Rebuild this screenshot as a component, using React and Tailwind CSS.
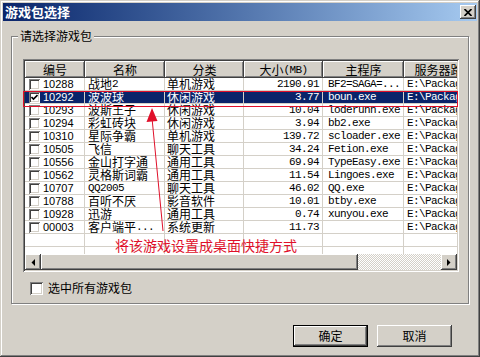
const raised = "shadow-[inset_-1px_-1px_#404040,inset_1px_1px_#ffffff,inset_-2px_-2px_#808080,inset_2px_2px_#d4d0c8]";
const sunken = "shadow-[inset_1px_1px_#808080,inset_-1px_-1px_#ffffff,inset_2px_2px_#404040,inset_-2px_-2px_#d4d0c8]";
const mono = "font-['Liberation_Mono',monospace] text-[11px] tracking-[-0.6px]";

const colW = ['w-[60px]', 'w-[80px]', 'w-[79px]', 'w-[79px]', 'w-[81px]', 'w-[81px]'];
const headers = ['编号', '名称', '分类', '大小(MB)', '主程序', '服务器路径'];

const games = [
    ['10288', '战地2', '单机游戏', '2190.91', 'BF2=SAGA=...'],
    ['10292', '波波球', '休闲游戏', '3.77', 'boun.exe'],
    ['10293', '波斯王子', '休闲游戏', '10.04', 'loderunn.exe'],
    ['10294', '彩虹砖块', '休闲游戏', '3.94', 'bb2.exe'],
    ['10310', '星际争霸', '单机游戏', '139.72', 'scloader.exe'],
    ['10505', '飞信', '聊天工具', '34.24', 'Fetion.exe'],
    ['10556', '金山打字通', '通用工具', '69.94', 'TypeEasy.exe'],
    ['10562', '灵格斯词霸', '通用工具', '11.54', 'Lingoes.exe'],
    ['10707', 'QQ2005', '聊天工具', '46.02', 'QQ.exe'],
    ['10788', '百听不厌', '影音软件', '10.01', 'btby.exe'],
    ['10928', '迅游', '通用工具', '0.74', 'xunyou.exe'],
    ['00003', '客户端平...', '系统更新', '11.73', ''],
];

// SimSun-ish: ascii runs get the narrow mono face
const mix = (s) => s.split(/([\x20-\x7e]+)/).filter(Boolean).map((part, i) =>
    /^[\x20-\x7e]+$/.test(part)
        ? <span key={i} className={mono}>{part}</span>
        : <span key={i}>{part}</span>
);

const CheckBox = ({ checked, size = 'w-[11px] h-[11px]' }) => (
    <span className={`${size} shrink-0 bg-white flex items-center justify-center ${sunken}`}>
        {checked && (
            <svg width="7" height="7" viewBox="0 0 7 7">
                <path d="M0.5 3 L2.5 5 L6.5 1" stroke="#000" strokeWidth="1.6" fill="none" />
            </svg>
        )}
    </span>
);

const Row = ({ g, selected }) => {
    const cell = `shrink-0 h-full border-r border-[#d4d0c8] flex items-center overflow-hidden whitespace-nowrap leading-[12px]`;
    return (
        <div className={`flex h-[13px] shrink-0 border-b border-[#d4d0c8] ${selected ? 'bg-[#0a246a] text-white' : ''}`}>
            <div className={`${cell} ${colW[0]}`}>
                {g && <span className="ml-[4px]"><CheckBox checked={selected} /></span>}
                {g && <span className="ml-[3px] font-['Liberation_Sans',sans-serif] text-[11px]">{g[0]}</span>}
            </div>
            <div className={`${cell} ${colW[1]} pl-[3px]`}>{g && mix(g[1])}</div>
            <div className={`${cell} ${colW[2]} pl-[2px]`}>{g && g[2]}</div>
            <div className={`${cell} ${colW[3]} justify-end pr-[3px] ${mono}`}>{g && g[3]}</div>
            <div className={`${cell} ${colW[4]} pl-[5px] ${mono}`}>{g && g[4]}</div>
            <div className={`${cell} ${colW[5]} pl-[3px] ${mono}`}>{g && 'E:\\Packages\\'}</div>
        </div>
    );
};

export default function App() {
    return (
        <div className={`relative w-[480px] h-[357px] overflow-hidden bg-[#d4d0c8] p-[3px] text-[12px] text-black font-['Noto_Sans_CJK_SC',sans-serif] shadow-[inset_-1px_-1px_#404040,inset_1px_1px_#d4d0c8,inset_-2px_-2px_#808080,inset_2px_2px_#ffffff]`}>
            {/* title bar */}
            <div className="flex items-center justify-between h-[18px] bg-linear-to-r from-[#0a246a] to-[#a6caf0] pl-[2px] pr-[1px]">
                <span className="text-white font-bold text-[13px] leading-[18px]">游戏包选择</span>
                <div className={`w-[16px] h-[14px] bg-[#d4d0c8] flex items-center justify-center ${raised}`}>
                    <svg width="8" height="7" viewBox="0 0 8 7">
                        <path d="M0.5 0 L7.5 7 M7.5 0 L0.5 7" stroke="#000" strokeWidth="1.7" />
                    </svg>
                </div>
            </div>

            {/* group box */}
            <div className="mt-[15px] ml-[8px] w-[458px] h-[268px] border border-[#808080] shadow-[inset_1px_1px_#ffffff,1px_1px_#ffffff]">
                <div className="-mt-[9px] ml-[6px] w-fit px-[2px] bg-[#d4d0c8] leading-[16px]">请选择游戏包</div>

                {/* list view */}
                <div className={`ml-[11px] mt-[15px] w-[436px] h-[213px] bg-white p-[2px] flex flex-col ${sunken}`}>
                    <div className="flex h-[17px] shrink-0 overflow-hidden">
                        {headers.map((h, i) => (
                            <div key={h} className={`${colW[i]} shrink-0 h-full flex items-center justify-center bg-[#d4d0c8] whitespace-nowrap leading-[12px] shadow-[inset_-1px_-1px_#404040,inset_1px_1px_#ffffff,inset_-2px_-2px_#808080]`}>
                                {mix(h)}
                            </div>
                        ))}
                    </div>
                    <div className="flex-1 flex flex-col overflow-hidden">
                        {games.map((g, i) => <Row key={g[0]} g={g} selected={i === 1} />)}
                        <Row />
                        <Row />
                    </div>
                    {/* horizontal scrollbar */}
                    <div className="flex h-[16px] shrink-0">
                        <div className={`w-[16px] h-full bg-[#d4d0c8] flex items-center justify-center ${raised}`}>
                            <svg width="4" height="7" viewBox="0 0 4 7"><polygon points="4,0 4,7 0.5,3.5" fill="#000" /></svg>
                        </div>
                        <div className={`w-[317px] h-full bg-[#d4d0c8] ${raised}`} />
                        <div className="flex-1 h-full bg-[image:repeating-conic-gradient(#d4d0c8_0%_25%,#ffffff_0%_50%)] bg-[length:2px_2px]" />
                        <div className={`w-[16px] h-full bg-[#d4d0c8] flex items-center justify-center ${raised}`}>
                            <svg width="4" height="7" viewBox="0 0 4 7"><polygon points="0,0 0,7 3.5,3.5" fill="#000" /></svg>
                        </div>
                    </div>
                </div>

                <div className="mt-[8px] ml-[18px] flex items-center gap-[5px] h-[16px]">
                    <CheckBox size="w-[13px] h-[13px]" />
                    <span className="leading-[16px]">选中所有游戏包</span>
                </div>
            </div>

            {/* buttons */}
            <div className="mt-[21px] flex justify-end gap-[9px] pr-[25px]">
                <div className="w-[75px] h-[22px] border border-black">
                    <div className={`w-full h-full flex items-center justify-center bg-[#d4d0c8] ${raised}`}>确定</div>
                </div>
                <div className={`w-[75px] h-[22px] flex items-center justify-center bg-[#d4d0c8] ${raised}`}>取消</div>
            </div>

            {/* red annotation */}
            <div className="absolute left-[23px] top-[91px] w-[435px] h-[16px] border border-[#e0102a]" />
            <svg className="absolute left-0 top-0 pointer-events-none" width="480" height="357">
                <line x1="152" y1="118" x2="163" y2="231" stroke="#e0102a" strokeWidth="1" />
                <polygon points="152,108 146.5,122 157.5,121" fill="#e0102a" />
            </svg>
            <div className="absolute left-[115px] top-[236px] text-[14px] leading-[18px] text-[#e0102a] whitespace-nowrap">将该游戏设置成桌面快捷方式</div>
        </div>
    );
}
